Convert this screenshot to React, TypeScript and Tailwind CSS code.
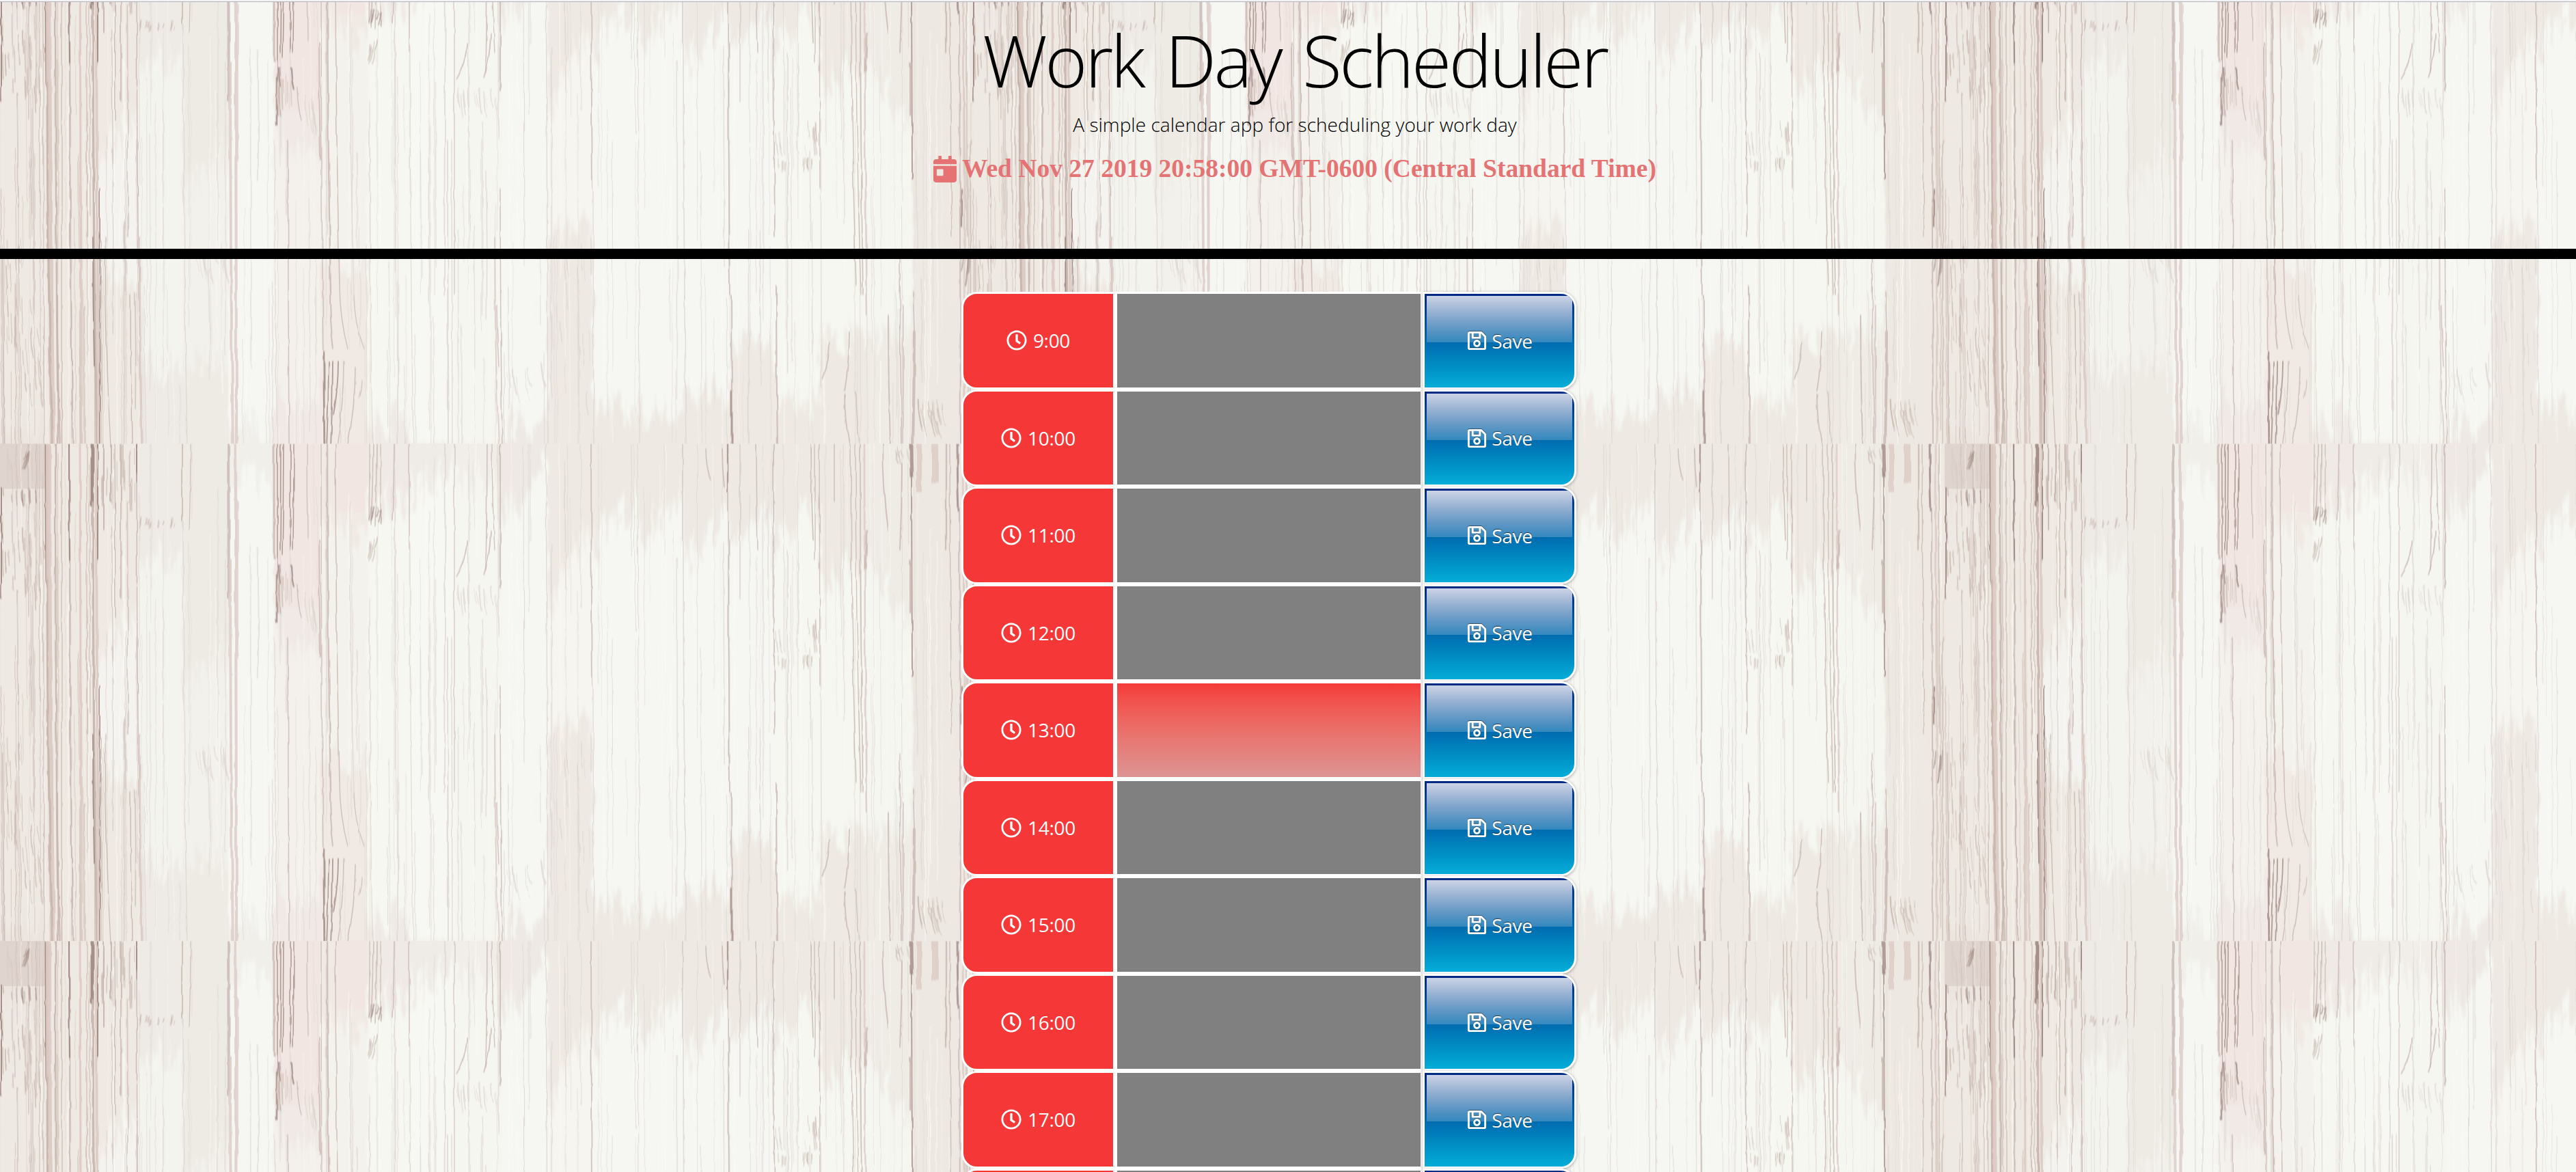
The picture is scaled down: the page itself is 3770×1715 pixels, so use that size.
import React from "react";
import { FaCalendarDay, FaRegClock, FaRegSave } from "react-icons/fa";

const TILE_W = 1423;
const TILE_H = 727.7;

function seeded(seed: number) {
  let s = seed;
  return () => {
    s = (s * 1664525 + 1013904223) % 4294967296;
    return s / 4294967296;
  };
}

// Stretches the upper part of the wood figure and compresses the lower part.
function stretch(y: number) {
  if (y <= 350) return y * 1.416;
  if (y <= 520) return 495.6 + ((y - 350) / 170) * 49.4;
  return 545 + ((y - 520) / 207) * 182.7;
}

const BEIGE = "#eee9e3";
const PALE = "#f7f8f3";

// [left edge, board colour, patch top (left), patch top (right), patch bottom, patch strength, grain lines, grain tone]
type Board = [number, string, number, number, number, number, number, number];
const BOARDS: Board[] = [
  [0, "#ece4de", 60, 90, 700, 0.25, 30, 1],
  [67, "#eee7e0", 0, 0, 727, 0.12, 20, 1],
  [136, "#eee9e3", 220, 180, 345, 0.7, 18, 1],
  [201, "#eeeae5", 120, 110, 600, 0.7, 12, 0],
  [267, "#eeeae4", 250, 200, 600, 0.5, 10, 0],
  [335, "#f0efea", 40, 40, 690, 0.95, 10, 0],
  [400, "#f0e9e5", 190, 230, 660, 0.5, 12, 0],
  [470, "#f0e9e4", 70, 100, 325, 0.6, 10, 0],
  [538, "#efeae5", 50, 70, 690, 0.9, 14, 0],
  [600, "#efebe6", 50, 25, 727, 1, 9, 0],
  [665, "#f1eee9", 20, 60, 727, 0.8, 18, 0],
  [733, "#eee9e4", 70, 25, 690, 0.95, 8, 0],
  [802, "#efe9e3", 160, 80, 290, 0.8, 10, 0],
  [868, BEIGE, 110, 45, 675, 0.95, 8, 0],
  [933, BEIGE, 95, 50, 675, 0.95, 10, 0],
  [1000, BEIGE, 130, 55, 640, 0.95, 10, 0],
  [1069, BEIGE, 100, 60, 560, 0.95, 10, 0],
  [1134, BEIGE, 110, 60, 665, 0.9, 12, 0],
  [1200, "#eee9e3", 140, 120, 545, 0.9, 12, 0],
  [1270, "#efebe5", 110, 190, 550, 0.85, 14, 0],
  [1336, "#ede8e1", 300, 320, 460, 0.1, 10, 0],
  [1408, "#ede8e1", 300, 320, 460, 0.1, 4, 1],
];

const TONES = ["#ddd5cf", "#c8b7b0", "#a08a84", "#dccbc4"];

// [x, y start, y end, width, tone, drift]
type Streak = [number, number, number, number, number, number];
const STREAKS: Streak[] = [
  [2, 45, 160, 2, 2, 0], [68, 0, 145, 5, 2, 1], [71, 0, 727, 8, 3, 6], [69, 140, 727, 3, 1, 8],
  [81, 0, 727, 2.4, 1, 4], [84, 400, 727, 2, 1, 4], [101, 0, 120, 2.2, 2, 1], [102, 120, 727, 1.8, 1, 5],
  [90, 0, 727, 1.2, 1, 0], [117, 0, 727, 3, 3, 2], [127, 0, 300, 1.2, 1, 0], [135, 0, 65, 5, 2, 0],
  [136, 60, 727, 3.4, 1, 6], [136, 300, 600, 1.8, 2, 2], [141, 0, 727, 4, 3, 4], [143, 0, 120, 2, 2, 0],
  [146, 250, 727, 1.6, 2, 1], [152, 0, 90, 2, 1, 0], [154, 300, 727, 1.2, 1, 8], [162, 0, 60, 2, 1, 0],
  [168, 0, 180, 1.3, 1, 1], [177, 0, 160, 1.6, 1, 0], [191, 400, 727, 1.4, 1, 2], [200, 0, 40, 2, 2, 0],
  [200, 30, 420, 1.4, 1, 3], [204, 300, 727, 3.4, 3, 4], [211, 350, 727, 1.2, 0, 3],
  [267, 0, 80, 2, 1, 0], [268, 80, 727, 1.4, 0, 6], [279, 0, 90, 1.2, 1, -2],
  [334, 0, 160, 4, 1, 1], [337, 120, 727, 4, 3, 4], [345, 0, 727, 4, 3, 1], [348, 60, 220, 1, 1, 0],
  [401, 0, 120, 3, 1, 0], [406, 0, 140, 1.6, 2, 0], [411, 0, 110, 1.6, 2, -1], [415, 0, 115, 1.6, 2, -2],
  [425, 0, 110, 1.6, 2, 0], [430, 0, 110, 1.5, 2, -1], [408, 125, 145, 2.6, 2, 2], [427, 125, 148, 2.4, 2, 4],
  [405, 135, 185, 2.6, 2, 0], [408, 145, 175, 2, 1, 1], [435, 145, 180, 1.4, 1, 6],
  [450, 0, 98, 1.3, 1, 1], [467, 100, 220, 2, 1, 2], [402, 200, 727, 1.3, 0, 4], [421, 200, 727, 1.5, 1, 2],
  [470, 0, 727, 1.4, 1, 4], [479, 0, 400, 2.4, 1, 5], [483, 400, 570, 2, 1, 5], [491, 0, 350, 1.6, 1, 6],
  [497, 350, 570, 1.4, 1, 12], [512, 60, 400, 1.2, 0, 6], [518, 400, 570, 1.2, 1, 15],
  [474, 575, 727, 2.6, 2, 1], [481, 590, 727, 1.8, 2, -3], [487, 590, 727, 1.8, 2, -3], [495, 590, 680, 1.8, 2, -7],
  [503, 590, 727, 1.5, 1, -10], [520, 600, 727, 1.6, 1, -12], [529, 620, 650, 1.2, 1, -4],
  [541, 0, 80, 1.4, 1, -1], [546, 0, 84, 1.6, 1, -3], [551, 0, 86, 1.6, 1, -2], [557, 0, 84, 1.4, 1, 0],
  [577, 0, 80, 1.6, 1, -3], [599, 0, 110, 1.4, 1, 0], [600, 100, 727, 1.2, 0, 5], [541, 160, 727, 1.2, 0, 4],
  [652, 0, 400, 1.8, 0, -2], [655, 200, 727, 1.8, 0, 1], [661, 200, 727, 1.4, 0, 1], [665, 0, 400, 1.2, 1, 0],
  [684, 100, 138, 1.8, 1, -16], [713, 0, 130, 1.6, 1, -2], [718, 90, 135, 1.8, 1, -10], [720, 0, 110, 1.4, 1, 4],
  [732, 0, 150, 2.2, 1, 0], [732, 250, 727, 1.5, 1, 3],
  [724, 300, 727, 2, 3, 6], [727, 450, 600, 1.4, 1, 3], [766, 0, 330, 1.1, 0, 1], [776, 0, 100, 1, 0, 0],
  [799, 0, 727, 1.5, 0, 3], [850, 0, 170, 1, 0, 0], [865, 0, 250, 1.8, 1, 2], [868, 250, 727, 1.3, 0, 1],
  [933, 0, 300, 1.1, 0, 1], [935, 300, 727, 1.2, 0, 2], [999, 0, 100, 1.2, 1, 0], [1000, 100, 420, 1.6, 0, 2],
  [1002, 400, 727, 1.5, 0, 2], [1033, 5, 38, 1.6, 1, 7], [1057, 5, 45, 1.8, 1, 3], [1065, 0, 50, 2.4, 2, 0],
  [1066, 50, 400, 1.7, 1, 2], [1070, 400, 640, 2, 1, 1], [1071, 640, 727, 3, 2, 0], [1083, 0, 160, 1, 1, 0],
  [1106, 0, 110, 1.5, 1, 2], [1132, 0, 300, 1.8, 1, 2], [1136, 350, 727, 2.2, 1, 2], [1187, 0, 100, 1.8, 1, 3],
  [1193, 0, 120, 1.4, 1, 0], [1199, 0, 250, 1.4, 1, 1], [1221, 0, 60, 1.5, 1, 0], [1245, 0, 350, 1.5, 1, 8],
  [1252, 0, 400, 1.4, 1, 8], [1259, 0, 400, 1.7, 1, 4], [1265, 0, 500, 2.6, 3, 4], [1268, 90, 130, 3, 1, -2],
  [1214, 560, 620, 1.8, 1, -10], [1243, 540, 640, 1.8, 1, -7], [1236, 645, 727, 1.8, 1, 8], [1253, 640, 727, 1.3, 1, 6],
  [1292, 0, 90, 1.9, 1, 8], [1320, 20, 110, 2, 1, -3], [1333, 0, 35, 5, 2, 1], [1334, 30, 240, 1.9, 2, 1],
  [1333, 120, 175, 4, 1, 0], [1300, 500, 727, 2, 1, 3], [1317, 320, 727, 1.5, 1, 3], [1322, 450, 727, 1.4, 1, 0],
  [1337, 380, 540, 1.7, 1, 1], [1338, 540, 727, 4, 1, -2], [1345, 0, 50, 8, 3, 0], [1368, 0, 40, 10, 3, 0],
  [1385, 0, 110, 2.4, 1, 0], [1390, 0, 300, 1.4, 1, 3], [1401, 0, 70, 3, 2, 2], [1404, 70, 727, 2, 1, 2],
  [1407, 250, 290, 2.4, 2, 0], [1410, 0, 727, 3, 3, 2], [1415, 0, 300, 1.4, 1, 0], [1420, 200, 727, 1.4, 1, 0],
];

// [x, y, width, height, stroke count, tone, slant]
type Knot = [number, number, number, number, number, number, number];
const KNOTS: Knot[] = [
  [4, 4, 60, 40, 14, 3, 2], [36, 6, 12, 24, 5, 2, -6], [4, 46, 60, 22, 11, 2, 1], [2, 66, 62, 110, 24, 1, 1],
  [6, 300, 26, 280, 16, 1, 2], [32, 420, 28, 260, 14, 1, 3], [140, 0, 60, 70, 22, 1, 0],
  [203, 76, 62, 12, 14, 1, -2], [273, 310, 60, 40, 12, 0, 5], [402, 130, 28, 50, 8, 1, 1],
  [435, 150, 32, 50, 8, 0, 4], [540, 64, 20, 20, 7, 2, -3], [540, 92, 18, 30, 6, 1, -4],
  [668, 145, 60, 35, 14, 0, 3],
  [738, 590, 60, 70, 7, 0, 7], [806, 320, 58, 40, 5, 0, 2], [806, 300, 58, 400, 14, 0, 2],
  [1135, 190, 62, 30, 8, 0, 3], [1178, 180, 18, 36, 5, 1, 2], [1138, 218, 58, 16, 12, 1, 0],
  [1290, 2, 44, 20, 6, 1, 4], [1342, 650, 62, 70, 14, 1, 6], [1409, 315, 12, 40, 5, 2, -2],
];

function buildPatches() {
  const rnd = seeded(77);
  return BOARDS.map((b, i) => {
    const x0 = b[0];
    const x1 = i + 1 < BOARDS.length ? BOARDS[i + 1][0] : TILE_W;
    const n = Math.max(4, Math.round((x1 - x0) / 3));
    const pts: string[] = [];
    for (let k = 0; k <= n; k++) {
      const t = k / n;
      const y = stretch(b[2] + (b[3] - b[2]) * t) + (b[2] > 0 ? (rnd() - 0.5) * 80 : 0);
      pts.push(`${(x0 + (x1 - x0) * t).toFixed(1)},${Math.max(0, y).toFixed(0)}`);
    }
    for (let k = n; k >= 0; k--) {
      const t = k / n;
      const y = stretch(b[4]) + (b[4] < 727 ? (rnd() - 0.5) * 70 : 0);
      pts.push(`${(x0 + (x1 - x0) * t).toFixed(1)},${Math.min(TILE_H, y).toFixed(0)}`);
    }
    return <polygon key={i} points={pts.join(" ")} fill={PALE} opacity={b[5]} />;
  });
}

function buildGrain() {
  const rnd = seeded(4211);
  const out: React.ReactElement[] = [];
  BOARDS.forEach((b, i) => {
    const x1 = i + 1 < BOARDS.length ? BOARDS[i + 1][0] : TILE_W;
    for (let k = 0; k < b[6] * 1.5; k++) {
      const x = b[0] + 1 + rnd() * (x1 - b[0] - 2);
      const len = 100 + rnd() * 420;
      const y = rnd() * TILE_H - 80;
      const light = rnd() > 0.7;
      out.push(
        <path
          key={`${i}-${k}`}
          d={`M${x.toFixed(1)} ${Math.max(0, y).toFixed(0)}q${(rnd() * 2).toFixed(1)} ${(len / 2).toFixed(0)} ${(rnd() * 2).toFixed(1)} ${len.toFixed(0)}`}
          stroke={light ? "#fbfaf6" : TONES[b[7]]}
          strokeWidth={0.8 + rnd() * 1.1}
          opacity={0.3 + rnd() * 0.4}
        />
      );
    }
  });
  return out;
}

function buildStreaks() {
  return STREAKS.map((s, i) => {
    const y0 = s[1] === 0 ? -4 : stretch(s[1]);
    const y1 = s[2] === 727 ? 733 : stretch(s[2]);
    return (
      <path
        key={i}
        d={`M${s[0]} ${y0.toFixed(1)}Q${s[0]} ${((y0 + y1) / 2).toFixed(1)} ${s[0] + s[5]} ${y1.toFixed(1)}`}
        stroke={TONES[s[4]]}
        strokeWidth={s[3]}
        opacity={s[0] < 205 ? 0.95 : 0.8}
      />
    );
  });
}

function buildKnots() {
  const rnd = seeded(905);
  return KNOTS.flatMap((k, i) => {
    const top = stretch(k[1]);
    const height = stretch(Math.min(727, k[1] + k[3])) - top;
    return Array.from({ length: k[4] }, (_, j) => {
      const x = k[0] + rnd() * k[2];
      const len = Math.min(height, 70) * (0.3 + rnd() * 0.5);
      const y = top + rnd() * (height - len);
      return (
        <path
          key={`${i}-${j}`}
          d={`M${x.toFixed(1)} ${y.toFixed(1)}q${(k[6] * 0.1).toFixed(1)} ${(len * 0.6).toFixed(1)} ${k[6]} ${len.toFixed(1)}`}
          stroke={TONES[k[5]]}
          strokeWidth={1 + rnd() * 1.2}
          opacity={0.4 + rnd() * 0.35}
        />
      );
    });
  });
}

function WoodBackdrop() {
  return (
    <svg className="absolute inset-0 h-full w-full" aria-hidden="true">
      <defs>
        <filter id="rough" x="0" y="0" width="1423" height="728" filterUnits="userSpaceOnUse" colorInterpolationFilters="sRGB">
          <feTurbulence type="fractalNoise" baseFrequency="0.05 0.02" numOctaves={3} seed={8} result="n" />
          <feDisplacementMap in="SourceGraphic" in2="n" scale={4} xChannelSelector="R" yChannelSelector="G" />
          <feGaussianBlur stdDeviation="0.45 0.8" />
        </filter>
        <filter id="ragged" x="0" y="0" width="1423" height="728" filterUnits="userSpaceOnUse" colorInterpolationFilters="sRGB">
          <feTurbulence type="fractalNoise" baseFrequency="0.12 0.03" numOctaves={3} seed={3} result="n" />
          <feDisplacementMap in="SourceGraphic" in2="n" scale={14} xChannelSelector="R" yChannelSelector="G" />
          <feGaussianBlur stdDeviation="1 4" />
        </filter>
        <g id="tile">
          {BOARDS.map((b, i) => (
            <rect key={i} x={b[0]} y={0} width={(i + 1 < BOARDS.length ? BOARDS[i + 1][0] : TILE_W) - b[0]} height={728} fill={b[1]} />
          ))}
          <rect x={0} y={0} width={66} height={66} fill="#dccfca" opacity={0.8} />
          <rect x={402} y={0} width={66} height={240} fill="#f1e6e2" />
          <rect x={494} y={0} width={44} height={100} fill="#f1e6e2" />
          <g filter="url(#ragged)">{buildPatches()}</g>
          <g filter="url(#rough)" fill="none">
            {buildGrain()}
            {buildStreaks()}
            {buildKnots()}
          </g>
        </g>
        <pattern id="wood" x={0} y={-78.4} width={TILE_W} height={TILE_H} patternUnits="userSpaceOnUse">
          <use href="#tile" />
        </pattern>
      </defs>
      <rect width="100%" height="100%" fill="url(#wood)" />
    </svg>
  );
}

const HOURS = [9, 10, 11, 12, 13, 14, 15, 16, 17];
const CURRENT_HOUR = 13;

function HourRow({ hour }: { hour?: number }) {
  return (
    <div className="flex h-[142.5px]">
      <div className="flex w-[225px] items-center justify-center gap-[9px] rounded-l-[23px] border-[3px] border-white bg-[#f53737] text-[28px] text-white">
        {hour !== undefined && (
          <>
            <FaRegClock className="size-[30px]" />
            <span className="tracking-[-0.3px]">{hour}:00</span>
          </>
        )}
      </div>
      <div
        className={
          hour === CURRENT_HOUR
            ? "w-[450px] border-[3px] border-white bg-linear-to-b from-[#f53737] to-[#db9595] bg-origin-border"
            : "w-[450px] border-[3px] border-white bg-[#808080]"
        }
      />
      <button className="relative w-[225px] overflow-hidden rounded-r-[23px] border-[3px] border-white bg-linear-to-b from-[#002882] via-[#0069ad] to-[#06add8] text-[28px] text-white shadow-[0_1px_4px_rgba(0,0,0,0.35)]">
        <span className="absolute top-[3px] right-[3px] left-[3px] h-[68px] bg-linear-to-b from-white/80 to-white/20" />
        {hour !== undefined && (
          <span className="relative flex items-center justify-center gap-[6px] pt-px [text-shadow:0_-1px_1px_rgba(0,0,0,0.6)]">
            <FaRegSave className="size-[31px] drop-shadow-[0_-1px_0_rgba(0,0,0,0.45)]" />
            <span className="tracking-[-0.3px]">Save</span>
          </span>
        )}
      </button>
    </div>
  );
}

export default function App() {
  return (
    <div className="relative h-[1715px] w-full overflow-hidden bg-[#f2efea] font-['Open_Sans','Noto_Sans',sans-serif]">
      <WoodBackdrop />
      <div className="relative flex flex-col">
        <div className="h-[3px] border-b border-[#b4b4bc] bg-[#f3f3f5]" />
        <header className="flex h-[376px] flex-col items-center border-b-[15px] border-black pl-[20px] text-center">
          <h1 className="mt-[12px] text-[106px] leading-[144px] font-light tracking-[-3.6px] whitespace-nowrap text-black [word-spacing:8px]">
            Work Day Scheduler
          </h1>
          <p className="mt-[2px] text-[28px] leading-[42px] font-light tracking-[0.04px] whitespace-nowrap text-black">
            A simple calendar app for scheduling your work day
          </p>
          <p className="mt-[20px] flex items-center gap-[8px] font-['Liberation_Serif',serif] text-[37.5px] leading-[48px] font-bold whitespace-nowrap text-[#e57373]">
            <FaCalendarDay className="h-[39px] w-[34px]" />
            <span>Wed Nov 27 2019 20:58:00 GMT-0600 (Central Standard Time)</span>
          </p>
        </header>
        <main className="mt-[48px] ml-[1407px] w-[900px]">
          {HOURS.map((h) => (
            <HourRow key={h} hour={h} />
          ))}
          <HourRow />
        </main>
      </div>
    </div>
  );
}
